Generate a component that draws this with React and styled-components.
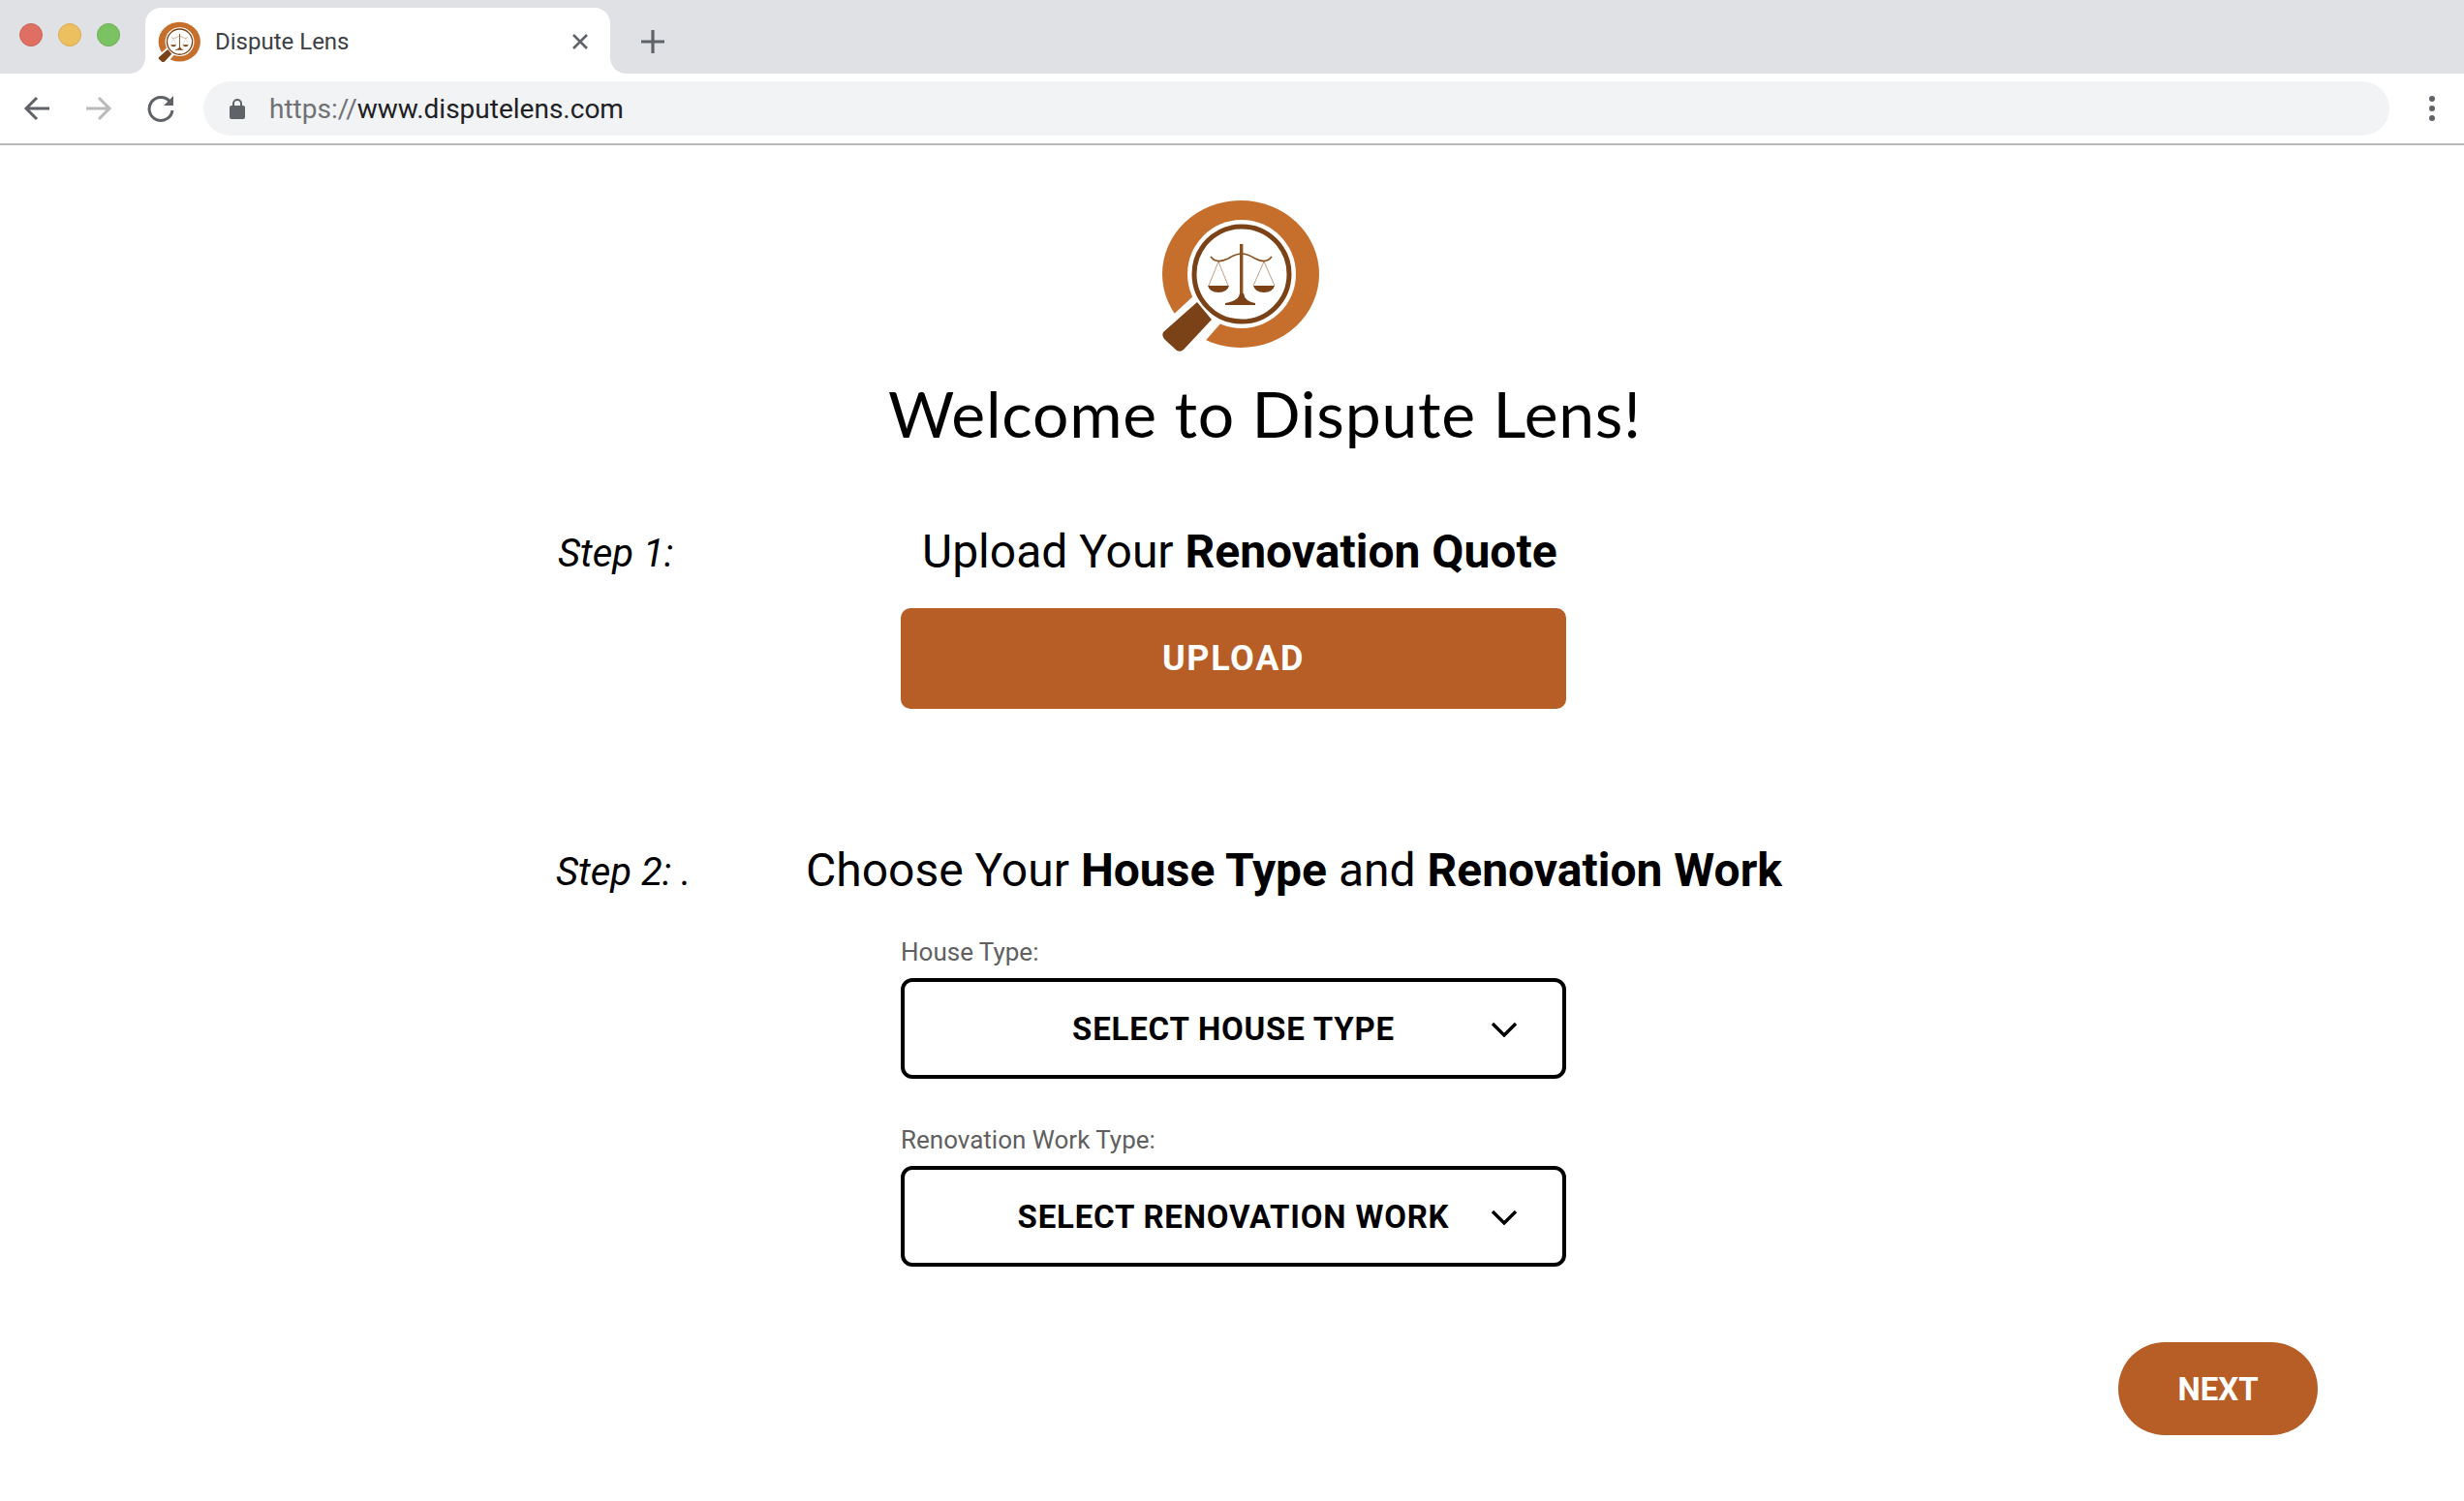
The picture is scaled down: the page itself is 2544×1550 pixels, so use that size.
import React from "react";
import styled, { createGlobalStyle } from "styled-components";

const Global = createGlobalStyle`
  html, body { margin: 0; padding: 0; background: #fff; }
  body { font-family: Roboto, "Liberation Sans", sans-serif; color: #000; }
  * { box-sizing: border-box; }
`;

const Page = styled.div`
  width: 2544px;
  height: 1550px;
  display: flex;
  flex-direction: column;
  overflow: hidden;
`;

/* ---------- browser chrome ---------- */
const TabBar = styled.div`
  height: 76px;
  background: #dfe1e5;
  display: flex;
  align-items: flex-end;
  padding-left: 20px;
`;
const Lights = styled.div`
  display: flex;
  gap: 16px;
  width: 130px;
  align-self: flex-start;
  padding-top: 24px;
`;
const Light = styled.span`
  width: 24px;
  height: 24px;
  border-radius: 50%;
  background: ${(p) => p.$fill};
  border: 1px solid ${(p) => p.$edge};
`;
const Tab = styled.div`
  position: relative;
  width: 480px;
  height: 68px;
  background: #fff;
  border-radius: 16px 16px 0 0;
  display: flex;
  align-items: center;
  padding: 2px 22px 0 12px;
  &::before, &::after {
    content: "";
    position: absolute;
    bottom: 0;
    width: 16px;
    height: 16px;
  }
  &::before { left: -16px; background: radial-gradient(circle at 0 0, #dfe1e5 15.5px, #fff 16px); }
  &::after { right: -16px; background: radial-gradient(circle at 100% 0, #dfe1e5 15.5px, #fff 16px); }
`;
const TabTitle = styled.span`
  flex: 1;
  margin-left: 14px;
  font-size: 24px;
  color: #3c4043;
`;
const NewTab = styled.div`
  width: 24px;
  height: 24px;
  margin: 0 0 21px 32px;
  display: flex;
`;
const Toolbar = styled.div`
  height: 74px;
  background: #fff;
  border-bottom: 2px solid #b9b9bb;
  display: flex;
  align-items: flex-start;
  padding: 8px 0 0 22px;
`;
const NavIcon = styled.div`
  width: 32px;
  height: 56px;
  margin-right: ${(p) => p.$gap}px;
  display: flex;
  align-items: center;
  justify-content: center;
`;
const UrlBar = styled.div`
  width: 2257px;
  height: 56px;
  background: #f1f3f4;
  border-radius: 28px;
  display: flex;
  align-items: center;
  padding-left: 27px;
  font-size: 28px;
`;
const UrlScheme = styled.span`
  color: #6f7174;
  margin-left: 25px;
`;
const UrlHost = styled.span`
  color: #202124;
`;
const MoreDots = styled.div`
  margin-left: 41px;
  height: 56px;
  display: flex;
  flex-direction: column;
  justify-content: center;
  gap: 4px;
`;
const MoreDot = styled.span`
  width: 6px;
  height: 6px;
  border-radius: 50%;
  background: #5f6368;
`;

/* ---------- page ---------- */
const Main = styled.main`
  flex: 1;
  display: flex;
  flex-direction: column;
`;
const Hero = styled.div`
  display: flex;
  flex-direction: column;
  align-items: flex-start;
  padding-top: 54px;
`;
const LogoSlot = styled.div`
  margin-left: 1194px;
  display: flex;
`;
const Title = styled.h1`
  margin: 23px 0 0 917px;
  font-family: "Lato", "Liberation Sans", sans-serif;
  font-weight: 400;
  font-size: 66px;
  line-height: 80px;
  letter-spacing: 0.75px;
  white-space: nowrap;
`;
const StepRow = styled.section`
  display: flex;
  align-items: center;
  padding-left: ${(p) => p.$left}px;
  margin-top: ${(p) => p.$top}px;
  height: 60px;
`;
const StepLabel = styled.div`
  width: ${(p) => p.$width}px;
  font-style: italic;
  font-size: 40px;
  padding-top: ${(p) => p.$drop}px;
  white-space: nowrap;
`;
const StepHeading = styled.h2`
  margin: 0;
  font-weight: 400;
  font-size: 48px;
  white-space: nowrap;
  b { font-weight: 700; }
`;
const Controls = styled.div`
  width: 687px;
  margin-left: 930px;
  display: flex;
  flex-direction: column;
  margin-top: ${(p) => p.$top}px;
`;
const UploadButton = styled.button`
  width: 100%;
  height: 104px;
  background: #b75e26;
  border: none;
  border-radius: 10px;
  color: #fff;
  font: 700 36px Roboto, sans-serif;
  letter-spacing: 1.6px;
  padding: 0;
`;
const FieldLabel = styled.label`
  font-size: 26px;
  line-height: 30px;
  color: #606060;
  margin-top: ${(p) => p.$top}px;
`;
const Select = styled.div`
  position: relative;
  height: 104px;
  margin-top: 12px;
  border: 4px solid #000;
  border-radius: 12px;
  display: flex;
  align-items: center;
  justify-content: center;
  font-weight: 700;
  font-size: 33px;
  letter-spacing: 0.8px;
`;
const Chevron = styled.svg`
  position: absolute;
  right: 46px;
  top: 41px;
`;
const NextRow = styled.div`
  display: flex;
  justify-content: flex-end;
  padding-right: 151px;
  margin-top: 78px;
`;
const NextButton = styled.button`
  width: 206px;
  height: 96px;
  background: #b75e26;
  border: none;
  border-radius: 48px;
  color: #fff;
  font: 700 33px Roboto, sans-serif;
`;

const Logo = ({ width }) => (
  <svg width={width} viewBox="0 0 172 160" style={{ display: "block" }}>
    <ellipse cx="87" cy="79" rx="81" ry="76" fill="#c66f2c" />
    <polygon points="14,124 40,100 68,128 46,153 30,141" fill="#fff" />
    <circle cx="88" cy="79" r="56" fill="#fff" />
    <circle cx="88" cy="79" r="49" fill="#fff" stroke="#7a4216" strokeWidth="5" />
    <path d="M42 108 L7 139 Q5 143 9 147 L21 158 Q25 160 28 157 L57 126 Z" fill="#7a4216" />
    <g fill="none" stroke="#8a5020">
      <rect x="86" y="48" width="3.4" height="58" fill="#8a5020" stroke="none" />
      <path d="M56 61 Q62 69 74 63 Q82 58 87.7 58 Q94 58 102 63 Q113 69 119 61" strokeWidth="1.6" />
      <path d="M64 66 L54 91 M64 66 L74 91 M111 66 L100 91 M111 66 L122 91" strokeWidth="0.8" opacity="0.7" />
    </g>
    <path d="M53 91 H75 Q73 98 64 98 Q55 98 53 91 Z M100 91 H122 Q120 98 111 98 Q102 98 100 91 Z" fill="#7a4216" />
    <path d="M71 109 Q85 107 86 99 H90 Q91 107 102 109 V111 H71 Z" fill="#7a4216" />
  </svg>
);

const ChevronIcon = () => (
  <Chevron width="28" height="16" viewBox="0 0 28 16">
    <path d="M2 2 L14 14 L26 2" fill="none" stroke="#000" strokeWidth="3.4" />
  </Chevron>
);

const Arrow = ({ color, flip }) => (
  <svg width="28" height="26" viewBox="0 0 28 26" style={flip ? { transform: "scaleX(-1)" } : undefined}>
    <path d="M27 13 H3 M14 2 L3 13 L14 24" fill="none" stroke={color} strokeWidth="3" />
  </svg>
);

export default function App() {
  return (
    <Page>
      <Global />
      <TabBar>
        <Lights>
          <Light $fill="#de6f62" $edge="#c9655a" />
          <Light $fill="#ecc05f" $edge="#d9ad52" />
          <Light $fill="#7bc263" $edge="#6dae57" />
        </Lights>
        <Tab>
          <Logo width={46} />
          <TabTitle>Dispute Lens</TabTitle>
          <svg width="18" height="18" viewBox="0 0 18 18">
            <path d="M2 2 L16 16 M16 2 L2 16" stroke="#5f6368" strokeWidth="2.6" />
          </svg>
        </Tab>
        <NewTab>
          <svg width="24" height="24" viewBox="0 0 24 24">
            <path d="M12 0 V24 M0 12 H24" stroke="#5f6368" strokeWidth="3.2" />
          </svg>
        </NewTab>
      </TabBar>
      <Toolbar>
        <NavIcon $gap={32}><Arrow color="#5f6368" /></NavIcon>
        <NavIcon $gap={32}><Arrow color="#b9babb" flip /></NavIcon>
        <NavIcon $gap={28}>
          <svg width="30" height="30" viewBox="0 0 30 30">
            <path d="M24.5 8 A12 12 0 1 0 27 17" fill="none" stroke="#5f6368" strokeWidth="3" />
            <path d="M18 12 H28 V2 Z" fill="#5f6368" />
          </svg>
        </NavIcon>
        <UrlBar>
          <svg width="16" height="22" viewBox="0 0 16 22">
            <path d="M4 9 V6 a4 4 0 0 1 8 0 V9" fill="none" stroke="#5f6368" strokeWidth="2" />
            <rect x="0" y="8" width="16" height="14" rx="2" fill="#5f6368" />
          </svg>
          <UrlScheme>https://</UrlScheme>
          <UrlHost>www.disputelens.com</UrlHost>
        </UrlBar>
        <MoreDots>
          <MoreDot />
          <MoreDot />
          <MoreDot />
        </MoreDots>
      </Toolbar>
      <Main>
        <Hero>
          <LogoSlot><Logo width={172} /></LogoSlot>
          <Title>Welcome to Dispute Lens!</Title>
        </Hero>
        <StepRow $left={576} $top={72}>
          <StepLabel $width={376} $drop={5}>Step 1:</StepLabel>
          <StepHeading>Upload Your <b>Renovation Quote</b></StepHeading>
        </StepRow>
        <Controls $top={29}>
          <UploadButton>UPLOAD</UploadButton>
        </Controls>
        <StepRow $left={574} $top={136}>
          <StepLabel $width={258} $drop={4}>Step 2: .</StepLabel>
          <StepHeading>Choose Your <b>House Type</b> and <b>Renovation Work</b></StepHeading>
        </StepRow>
        <Controls $top={40}>
          <FieldLabel $top={0}>House Type:</FieldLabel>
          <Select>SELECT HOUSE TYPE<ChevronIcon /></Select>
          <FieldLabel $top={48}>Renovation Work Type:</FieldLabel>
          <Select>SELECT RENOVATION WORK<ChevronIcon /></Select>
        </Controls>
        <NextRow>
          <NextButton>NEXT</NextButton>
        </NextRow>
      </Main>
    </Page>
  );
}
